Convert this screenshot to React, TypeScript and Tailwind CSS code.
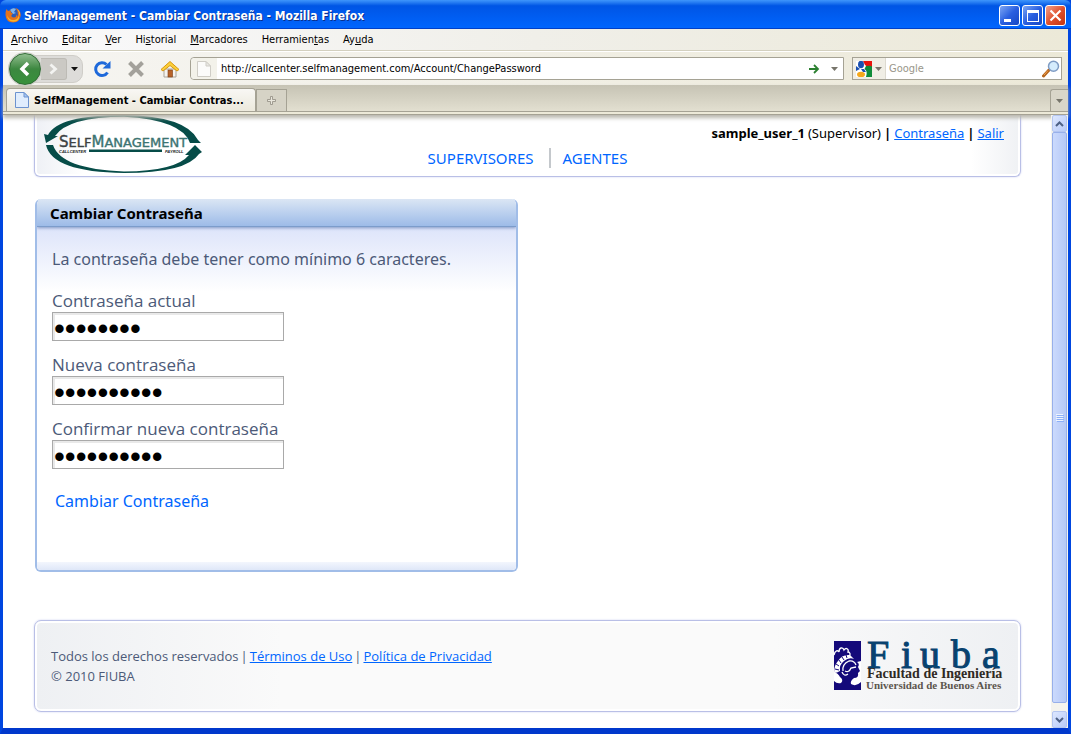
import React, { useState } from "react";

const chromeFont = "font-['DejaVu_Sans_Condensed','DejaVu_Sans',sans-serif]";

const menus: [string, string, string][] = [
  ["", "A", "rchivo"],
  ["", "E", "ditar"],
  ["", "V", "er"],
  ["Hi", "s", "torial"],
  ["", "M", "arcadores"],
  ["Herramien", "t", "as"],
  ["Ay", "u", "da"],
];

function FirefoxIcon() {
  return (
    <svg width="16" height="16" viewBox="0 0 16 16" aria-hidden="true">
      <circle cx="8.5" cy="7.5" r="6.3" fill="#2a5cb8" />
      <path d="M5 3 Q8 0 11 2 L9 5 L11 6 L8 7 Z" fill="#7fb6ee" />
      <path d="M1.5 2 L3 4 Q4.500 3 6 4 Q5 5 6.500 6 L8 6.500 L6.500 8 Q6 10.500 9 10.500 Q11.500 10 11.500 7.500 Q12.500 9 12 10 Q13.500 8 12.500 4 Q11.500 2 10 1 Q15.500 2 15.800 8 Q15 15.500 8 15.500 Q1 15.300 .5 8 Q.3 5 1.500 2 Z" fill="#e4721b" />
      <path d="M2 8 Q4 13.500 9 13 Q13 12.500 14 8 Q15 14.500 8.500 14.800 Q2.500 14.500 2 8 Z" fill="#f9b52c" />
      <path d="M12.500 2.500 Q15.500 5 15 9 Q14.500 5 12.500 2.500Z" fill="#ffe05a" />
    </svg>
  );
}

function PageIcon({ faint = false }: { faint?: boolean }) {
  return (
    <svg width="14" height="16" viewBox="0 0 14 16" aria-hidden="true">
      <path d="M.5 .5 H9 L13.500 5 V15.500 H.5 Z" fill={faint ? "#fbfbfa" : "#e0edfd"} stroke={faint ? "#cfcdc6" : "#6c93cf"} />
      <path d="M9 .5 V5 H13.500 Z" fill={faint ? "#e9e8e4" : "#a9c8f4"} stroke={faint ? "#cfcdc6" : "#6c93cf"} />
    </svg>
  );
}

function Caret({ color = "#77756b" }: { color?: string }) {
  return (
    <svg width="7" height="4" viewBox="0 0 7 4" aria-hidden="true">
      <path d="M0 0 H7 L3.500 4 Z" fill={color} />
    </svg>
  );
}

function SelfManagementLogo() {
  return (
    <svg width="160" height="60" viewBox="0 0 160 60" role="img" aria-label="SelfManagement Callcenter Payroll">
      <g fill="#064c48">
        <path d="M4 20 Q14 0 80 0 Q142 1 154 25 L157 28 H146 Q138 5 80 1.800 Q24 2 11 21 L14 21 L2 28 L0 19 Z" />
        <path d="M151 30 L158 37 L155 39 Q142 58 80 58 Q8 57 2 30 H9 Q17 54 80 56.500 Q132 56 145 40 L141 40 Z" />
      </g>
      <g fontFamily="'DejaVu Sans',sans-serif">
        <text x="15" y="32" fontSize="15" fill="#3c4244" stroke="#3c4244" strokeWidth=".4">S<tspan fontSize="13">ELF</tspan><tspan fill="#3c7472" stroke="#3c7472">M</tspan><tspan fill="#3c7472" stroke="#3c7472" fontSize="13">ANAGEMENT</tspan></text>
      </g>
      <g fontFamily="'Liberation Sans',sans-serif" fontSize="4" fontWeight="bold" fontStyle="italic" fill="#222">
        <text x="15" y="38">CALLCENTER</text>
        <text x="121" y="38">PAYROLL</text>
      </g>
      <rect x="45" y="34.500" width="73" height="2.500" fill="#064c48" />
    </svg>
  );
}

function FiubaLogo() {
  return (
    <svg width="170" height="52" viewBox="0 0 170 52" className="overflow-visible" role="img" aria-label="Fiuba, Facultad de Ingeniería, Universidad de Buenos Aires">
      <rect x="1" y="1" width="27" height="49" fill="#14097a" />
      <path d="M1 15 C2 10 5 10 6 12 C6 7 10 7 11 10 C13 7 16 9 15 12 C17 12 18 15 16 16" fill="none" stroke="#fff" strokeWidth="1.300" />
      <path d="M17 15 Q9 14 5 21 Q1 25 1 33 Q4 33 7 31 Q6 25 11 21 Q16 17 21 19 Z" fill="#fff" />
      <path d="M13 15 L14 18 M9 17 L11 20 M6 20 L8 23 M3 24 L6 26 M2 29 L6 30" stroke="#14097a" strokeWidth="1" />
      <path d="M10 31 Q9 24 16 21 Q21 20 23 25 M12 31 Q16 33 18 28 L23 27 M9 32 Q11 37 15 34" fill="none" stroke="#fff" strokeWidth="1.300" />
      <path d="M1 32 Q5 33 7 37 Q11 40 8 43 Q4 44 1 41 Z" fill="#fff" />
      <path d="M28 21 L24 22 Q27 24 25 27 L27 31 L25 33 Q26 38 21 38 Q17 41 18 44 Q23 47 28 42 Z" fill="#fff" />
      <g fontFamily="'Liberation Serif',serif" fontWeight="bold">
        <text x="34 68 87 118 149" y="28" fontSize="40" fontWeight="normal" fill="#08426f" stroke="#08426f" strokeWidth="1">Fiuba</text>
        <text x="34" y="38" fontSize="14" fill="#2f2a24">Facultad de Ingeniería</text>
        <text x="33" y="49" fontSize="11" fill="#5b554d">Universidad de Buenos Aires</text>
      </g>
    </svg>
  );
}

function TitleBar() {
  const box = "flex size-[21px] items-center justify-center rounded-[3px] border border-white ";
  const blue = box + "bg-linear-to-br from-[#7ea5f3] via-[#2a5fe0] to-[#1747c4]";
  return (
    <div className="flex h-[29px] items-center rounded-t-md bg-linear-to-b from-[#3f96fb] via-[#0055e5] via-20% to-[#0066ff] px-[5px] shadow-[inset_0_-1px_0_#0040c8]">
      <FirefoxIcon />
      <h1 className="ml-[3px] flex-1 truncate pt-[3px] text-[12px] font-bold text-white [text-shadow:1px_1px_0_#0a2f8c]">
        SelfManagement - Cambiar Contraseña - Mozilla Firefox
      </h1>
      <div className="flex gap-[2px] pt-[2px]">
        <button aria-label="Minimizar" className={blue}>
          <span className="mt-[9px] mr-[5px] h-[3px] w-[7px] bg-white" />
        </button>
        <button aria-label="Maximizar" className={blue}>
          <span className="h-[12px] w-[12px] border border-t-[3px] border-white" />
        </button>
        <button aria-label="Cerrar" className={box + "bg-linear-to-br from-[#f0a08a] via-[#e0502c] to-[#c43410]"}>
          <svg width="13" height="13" viewBox="0 0 13 13"><path d="M1.500 1.500 L11.500 11.500 M11.500 1.500 L1.500 11.500" stroke="#fff" strokeWidth="2.200" /></svg>
        </button>
      </div>
    </div>
  );
}

function MenuBar() {
  return (
    <nav className="flex h-[22px] items-center gap-[14px] border-b border-[#d3d0bf] bg-linear-to-r from-[#fafafc] via-[#f0efe9] to-[#ece9d8] pl-[8px]">
      {menus.map(([a, b, c]) => (
        <button key={a + b + c} className="text-[11px] leading-[16px] text-black">
          {a}<u>{b}</u>{c}
        </button>
      ))}
    </nav>
  );
}

function NavBar() {
  return (
    <div className="flex h-[34px] items-center border-t border-white bg-linear-to-r from-[#f6f5f2] to-[#ece9d8] pr-[6px] pl-[5px]">
      <div className="flex h-[28px] w-[75px] items-center rounded-l-[14px] rounded-r-[10px] border border-[#cfcdc8] bg-[#dddcd9]">
        <button aria-label="Atrás" className="-my-[2px] flex size-[32px] shrink-0 items-center justify-center rounded-full border border-[#2f6a33] bg-linear-to-b from-[#8fbd8e] via-[#3c8840] to-[#37913b] shadow-[0_0_0_1px_#c9ccc4]">
          <svg width="12" height="16" viewBox="0 0 12 16"><path d="M9 2 L3 8 L9 14" fill="none" stroke="#fff" strokeWidth="3.500" /></svg>
        </button>
        <button aria-label="Adelante" className="flex h-[22px] w-[26px] shrink-0 items-center justify-center rounded-r-[3px] border border-l-0 border-[#bdbbb5] bg-[#cbc9c4]">
          <svg width="9" height="12" viewBox="0 0 9 12"><path d="M1.500 1.500 L6.500 6 L1.500 10.500" fill="none" stroke="#f3f3f1" strokeWidth="2.800" /></svg>
        </button>
        <button aria-label="Historial reciente" className="ml-[4px]"><Caret color="#111" /></button>
      </div>
      <button aria-label="Recargar" className="ml-[10px]">
        <svg width="19" height="18" viewBox="0 0 19 18"><path d="M14.500 12.500 A6.400 6.400 0 1 1 13.500 4.500" fill="none" stroke="#1e69da" strokeWidth="3" /><path d="M17.500 1 V8.500 H9.500 Z" fill="#1e69da" /></svg>
      </button>
      <button aria-label="Detener" className="ml-[15px]">
        <svg width="18" height="18" viewBox="0 0 18 18"><path d="M2.500 2.500 L15.500 15.500 M15.500 2.500 L2.500 15.500" stroke="#a3a19b" strokeWidth="4" /></svg>
      </button>
      <button aria-label="Página de inicio" className="ml-[15px]">
        <svg width="20" height="18" viewBox="0 0 20 18"><path d="M4 9 H16 V17 H4 Z" fill="#f5f3ef" stroke="#a9a49a" /><path d="M1 9.500 L10 1.500 L19 9.500 L17 11 L10 5.500 L3 11 Z" fill="#fbcf38" stroke="#d99812" /><rect x="8" y="10" width="4.500" height="7" fill="#b7632b" stroke="#7a3e14" strokeWidth=".6" /></svg>
      </button>
      <div className="ml-[10px] flex h-[23px] min-w-0 flex-1 items-stretch rounded-l-[4px] border border-[#a5a294] bg-white">
        <span className="flex w-[26px] shrink-0 items-center justify-center rounded-l-[4px] bg-[#f3f2ea]"><PageIcon faint /></span>
        <input aria-label="Dirección" defaultValue="http://callcenter.selfmanagement.com/Account/ChangePassword" className="ml-[4px] min-w-0 flex-1 pt-[2px] text-[11px] outline-none" />
        <button aria-label="Ir" className="mr-[11px]">
          <svg width="12" height="10" viewBox="0 0 12 10"><path d="M1 5 H10 M6 1 L10 5 L6 9" fill="none" stroke="#2b8030" strokeWidth="1.800" /></svg>
        </button>
        <button aria-label="Mostrar historial" className="mr-[5px]"><Caret /></button>
      </div>
      <div className="ml-[8px] flex h-[23px] w-[210px] shrink-0 items-stretch border border-[#a5a294] bg-white">
        <button aria-label="Motor de búsqueda" className="flex w-[33px] items-center gap-[3px] border-r border-[#dddad0] bg-[#f0eee5] pl-[3px]">
          <svg width="16" height="16" viewBox="0 0 16 16"><rect width="16" height="16" fill="#fff" /><path d="M7 0 H16 V6 Q12 7 9 4 Z" fill="#e8130c" /><path d="M10 5 Q16 4 16 6 V16 H10 Q12 10 8.500 8 Z" fill="#0f8c3a" /><ellipse cx="5" cy="3.500" rx="3" ry="3.800" fill="#1a4fb0" /><path d="M0 5 L4 8 L0 10 Z" fill="#1a4fb0" /><path d="M5 8 L8 8 L10 11 L7 11 Z" fill="#1a4fb0" /><ellipse cx="5" cy="13.500" rx="4" ry="2.800" fill="#f5a81c" /></svg>
          <Caret />
        </button>
        <input aria-label="Buscar" placeholder="Google" className="ml-[3px] min-w-0 flex-1 pt-[2px] text-[11px] outline-none placeholder:text-[#99968a]" />
        <button aria-label="Iniciar búsqueda" className="mr-[1px]">
          <svg width="18" height="18" viewBox="0 0 18 18"><path d="M1.500 16 L7 10" stroke="#b5651d" strokeWidth="3" strokeLinecap="round" /><path d="M2 15 L6 10.500" stroke="#f0a050" strokeWidth="1" /><circle cx="11.500" cy="6.200" r="5" fill="#d5ecfd" stroke="#7f9cc4" strokeWidth="1.500" /></svg>
        </button>
      </div>
    </div>
  );
}

function TabBar() {
  return (
    <div className="flex h-[30px] flex-col bg-linear-to-b from-[#c6c3b4] to-[#e7e4d5] shadow-[0_3px_4px_#b9b7ae]">
      <div className="flex min-h-0 flex-1 items-end pl-[3px]">
        <button className="flex h-[23px] w-[250px] items-center gap-[5px] rounded-t-[4px] border border-b-0 border-[#a5a294] bg-linear-to-b from-[#f8f7f4] to-[#ece9dc] pl-[8px]">
          <PageIcon />
          <span className="truncate pt-[2px] text-[11px] font-bold">SelfManagement - Cambiar Contras...</span>
        </button>
        <button aria-label="Abrir una nueva pestaña" className="flex h-[22px] w-[31px] items-center justify-center border border-b-0 border-[#a5a294] bg-[#d6d3c6]">
          <svg width="9" height="9" viewBox="0 0 9 9"><path d="M3.500 .5 H5.500 V3.500 H8.500 V5.500 H5.500 V8.500 H3.500 V5.500 H.5 V3.500 H3.500 Z" fill="#e9e7dd" stroke="#8f8c80" strokeWidth=".8" /></svg>
        </button>
        <button aria-label="Listar pestañas" className="ml-auto flex h-[22px] w-[18px] items-center justify-center rounded-tl-[3px] border border-r-0 border-b-0 border-[#a5a294] bg-[#d9d6c9]"><Caret /></button>
      </div>
      <div className="h-[4px] border-y border-[#a5a294] bg-[#ece9d8]" />
    </div>
  );
}

function ScrollBar() {
  const btn = "flex h-[17px] w-[15px] items-center justify-center rounded-[2px] border border-[#b4c6f0] bg-linear-to-br from-[#dde7fe] to-[#b8cbf8]";
  return (
    <div className="relative flex w-[17px] shrink-0 flex-col items-center bg-[#f5f4ee]">
      <button aria-label="Subir" className={btn}>
        <svg width="9" height="6" viewBox="0 0 9 6"><path d="M1 5 L4.500 1.500 L8 5" fill="none" stroke="#4d6185" strokeWidth="2" /></svg>
      </button>
      <div className="flex w-[15px] flex-1 flex-col items-center justify-center gap-px rounded-[2px] border border-[#98b0ea] bg-linear-to-r from-[#cbdafd] to-[#b6c9f6]">
        {[0, 1, 2, 3].map((i) => <span key={i} className="h-px w-[7px] bg-[#eef4fe] shadow-[1px_1px_0_#8cb0f8]" />)}
      </div>
      <button aria-label="Bajar" className={btn + " mt-[8px]"}>
        <svg width="9" height="6" viewBox="0 0 9 6"><path d="M1 1 L4.500 4.500 L8 1" fill="none" stroke="#4d6185" strokeWidth="2" /></svg>
      </button>
    </div>
  );
}

const link = "text-[#0066ff] underline";

function Field({ id, label, initial }: { id: string; label: string; initial: string }) {
  const [value, setValue] = useState(initial);
  return (
    <div className="mb-[12px] flex flex-col">
      <label htmlFor={id} className="font-['Open_Sans',sans-serif] text-[17px] leading-[23px]">{label}</label>
      <input
        id={id}
        type="password"
        value={value}
        onChange={(e) => setValue(e.target.value)}
        className="h-[29px] w-[232px] border border-[#a9a9a9] bg-white pt-[5px] pl-px font-['Liberation_Sans',sans-serif] text-[31px] text-black shadow-[inset_2px_2px_0_#e9e9e9] outline-none"
      />
    </div>
  );
}

export default function App() {
  return (
    <div className={"flex min-h-screen flex-col bg-[#0046e0] text-[12px] text-black " + chromeFont}>
      <TitleBar />
      <div className="flex flex-1 flex-col border-x-[3px] border-b-[6px] border-[#0046e0] border-b-[#0038cc] bg-white">
        <div className="relative">
          <MenuBar />
          <NavBar />
          <TabBar />
        </div>
        <div className="flex flex-1">
          <div className="flex min-w-0 flex-1 flex-col pr-[30px] pb-[16px] pl-[31px] font-['Noto_Sans',sans-serif]">
            <header className="grid h-[62px] grid-cols-[1fr_auto_1fr] rounded-b-[6px] border border-t-0 border-[#b9bfe6] bg-[linear-gradient(to_right,#eef0f5,#fff_5%,#fff_95%,#eff1f4)] px-[9px] shadow-[inset_0_0_0_2px_#fff,0_0_2px_#c9cdf0]">
              <SelfManagementLogo />
              <nav className="mb-[8px] flex items-center self-end text-[15px] leading-[20px] text-[#0066ff]">
                <a href="#supervisores">SUPERVISORES</a>
                <span className="mr-[12px] ml-[15px] h-[20px] w-[2px] bg-[#c4c8cc]" />
                <a href="#agentes">AGENTES</a>
              </nav>
              <div className="flex justify-end gap-[3px] pt-[8px] pr-[7px] text-[13px] leading-[20px] whitespace-nowrap">
                <b>sample_user_1</b> <span>(Supervisor)</span> <b>|</b> <a href="#clave" className={link}>Contraseña</a> <b>|</b> <a href="#salir" className={link}>Salir</a>
              </div>
            </header>

            <main className="flex-1">
              <section className="mt-[22px] ml-px w-[483px] max-w-full overflow-hidden rounded-[6px] border-2 border-t-0 border-[#a1bde8]">
                <h2 className="relative h-[28px] border-b border-[#7c9ccb] bg-linear-to-b from-[#dbe6f4] to-[#9dbbe8] pl-[13px] text-[15px] leading-[29px] font-bold shadow-[0_1px_3px_#8097c4]">Cambiar Contraseña</h2>
                <form onSubmit={(e) => e.preventDefault()} className="bg-[linear-gradient(to_bottom,#dde4fa,#fff_65px)] text-[#4c5a78]">
                  <div className="px-[15px] pt-[20px] pb-[49px]">
                    <p className="mb-[18px] text-[16px] leading-[24px]">La contraseña debe tener como mínimo 6 caracteres.</p>
                    <Field id="actual" label="Contraseña actual" initial="abcdefgh" />
                    <Field id="nueva" label="Nueva contraseña" initial="abcdefghij" />
                    <Field id="confirmar" label="Confirmar nueva contraseña" initial="abcdefghij" />
                    <button type="submit" className="mt-[20px] ml-[3px] block text-[16px] leading-[24px] text-[#0066ff]">Cambiar Contraseña</button>
                  </div>
                  <div className="h-[8px] bg-linear-to-b from-[#f3f6fd] to-[#dfe7f8]" />
                </form>
              </section>
            </main>

            <footer className="flex items-center justify-between rounded-[7px] border border-[#b9bfe6] bg-[linear-gradient(to_right,#eef0f3,#fafafa_25%,#fafafa_75%,#eef0f3)] py-[19px] pr-[17px] pl-[16px] text-[#4c5a78] shadow-[inset_0_0_0_2px_#fff,0_0_2px_#c9cdf0]">
              <div className="text-[13px] leading-[20px] font-['Open_Sans',sans-serif]">
                <div className="flex gap-[2px]">
                  <span>Todos los derechos reservados</span> <span>|</span> <a href="#terminos" className={link}>Términos de Uso</a> <span>|</span> <a href="#privacidad" className={link}>Política de Privacidad</a>
                </div>
                <p>© 2010 FIUBA</p>
              </div>
              <FiubaLogo />
            </footer>
          </div>
          <ScrollBar />
        </div>
      </div>
    </div>
  );
}
